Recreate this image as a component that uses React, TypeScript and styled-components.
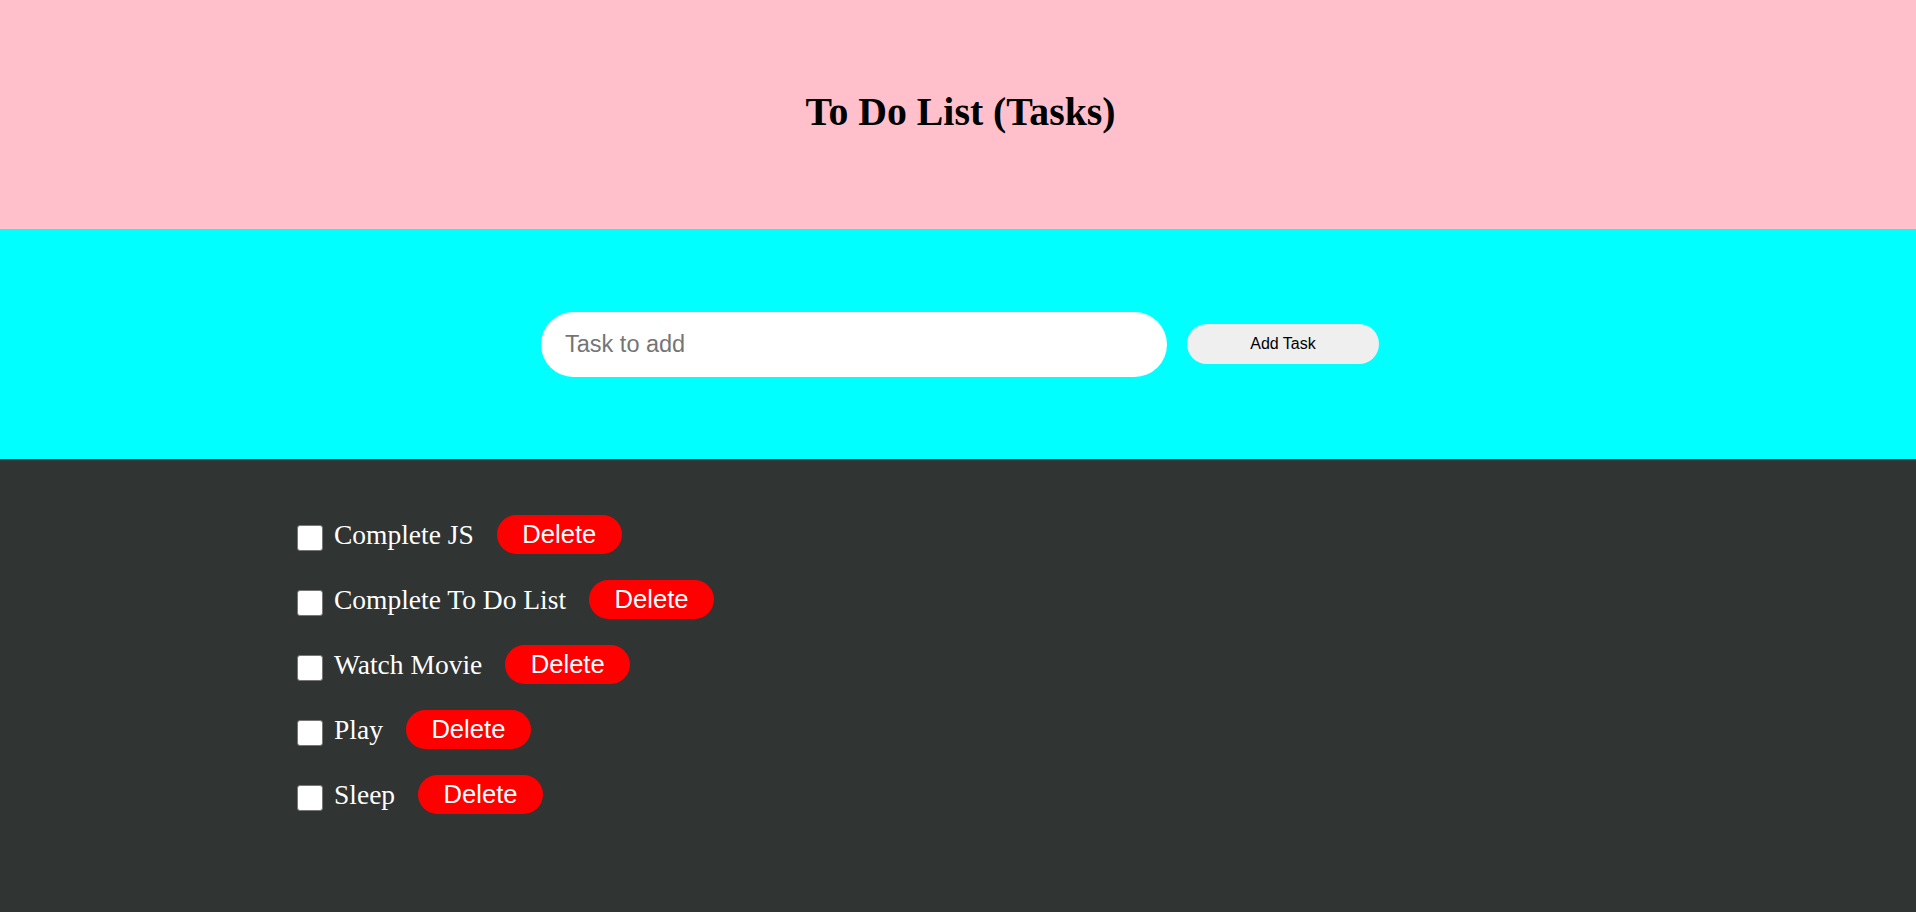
import React, { useState } from "react";
import styled, { createGlobalStyle } from "styled-components";

const Global = createGlobalStyle`
  html, body { margin: 0; padding: 0; }
  body { font-family: "Liberation Serif", "Times New Roman", serif; }
`;

const Header = styled.header`
  background: #ffc0cb;
  height: 229px;
  box-sizing: border-box;
  padding: 89px 0 0 5px;
  text-align: center;
`;

const Title = styled.h1`
  margin: 0;
  font-family: "Liberation Serif", serif;
  font-weight: bold;
  font-size: 39.8px;
  line-height: normal;
  color: #000;
`;

const InputBar = styled.section`
  background: #00ffff;
  height: 230px;
  box-sizing: border-box;
  padding-left: 4px;
  display: flex;
  align-items: center;
  justify-content: center;
  gap: 20px;
`;

const TaskInput = styled.input`
  width: 626px;
  height: 65px;
  box-sizing: border-box;
  border: none;
  border-radius: 33px;
  padding: 0 24px;
  font-family: "Liberation Sans", Arial, sans-serif;
  font-size: 23.5px;
  color: #000;
  background: #fff;
  outline: none;
  &::placeholder { color: #757575; }
`;

const AddButton = styled.button`
  width: 192px;
  height: 40px;
  border: none;
  border-radius: 20px;
  background: #efefef;
  font-family: "Liberation Sans", Arial, sans-serif;
  font-size: 16px;
  color: #000;
  cursor: pointer;
`;

const ListArea = styled.main`
  background: #303433;
  min-height: calc(100vh - 459px);
  box-sizing: border-box;
  padding: 43px 0 40px 297px;
`;

const TaskList = styled.ul`
  list-style: none;
  margin: 0;
  padding: 0;
`;

const Row = styled.li`
  display: flex;
  align-items: center;
  height: 65px;
`;

const Check = styled.input`
  appearance: none;
  -webkit-appearance: none;
  box-sizing: border-box;
  width: 26px;
  height: 26px;
  margin: 6px 11px 0 0;
  background: #fff;
  border: 1.5px solid #767676;
  border-radius: 3px;
  cursor: pointer;
  &:checked {
    background: #0075ff;
    border-color: #0075ff;
  }
`;

const Label = styled.span`
  font-family: "Liberation Serif", serif;
  font-size: 27.5px;
  color: #fff;
  margin-right: 23px;
`;

const DeleteButton = styled.button`
  border: none;
  border-radius: 20px;
  background: #ff0000;
  color: #fff;
  font-family: "Liberation Sans", Arial, sans-serif;
  font-size: 25.6px;
  height: 39px;
  padding: 0 25.5px;
  cursor: pointer;
`;

const initial = ["Complete JS", "Complete To Do List", "Watch Movie", "Play", "Sleep"];

export default function App() {
  const [tasks, setTasks] = useState<string[]>(initial);
  const [text, setText] = useState("");
  const add = () => {
    if (text.trim()) {
      setTasks([...tasks, text.trim()]);
      setText("");
    }
  };
  return (
    <>
      <Global />
      <Header>
        <Title>To Do List (Tasks)</Title>
      </Header>
      <InputBar>
        <TaskInput
          placeholder="Task to add"
          value={text}
          onChange={(e) => setText(e.target.value)}
        />
        <AddButton onClick={add}>Add Task</AddButton>
      </InputBar>
      <ListArea>
        <TaskList>
          {tasks.map((t, i) => (
            <Row key={t + i}>
              <Check type="checkbox" />
              <Label>{t}</Label>
              <DeleteButton onClick={() => setTasks(tasks.filter((_, j) => j !== i))}>
                Delete
              </DeleteButton>
            </Row>
          ))}
        </TaskList>
      </ListArea>
    </>
  );
}
